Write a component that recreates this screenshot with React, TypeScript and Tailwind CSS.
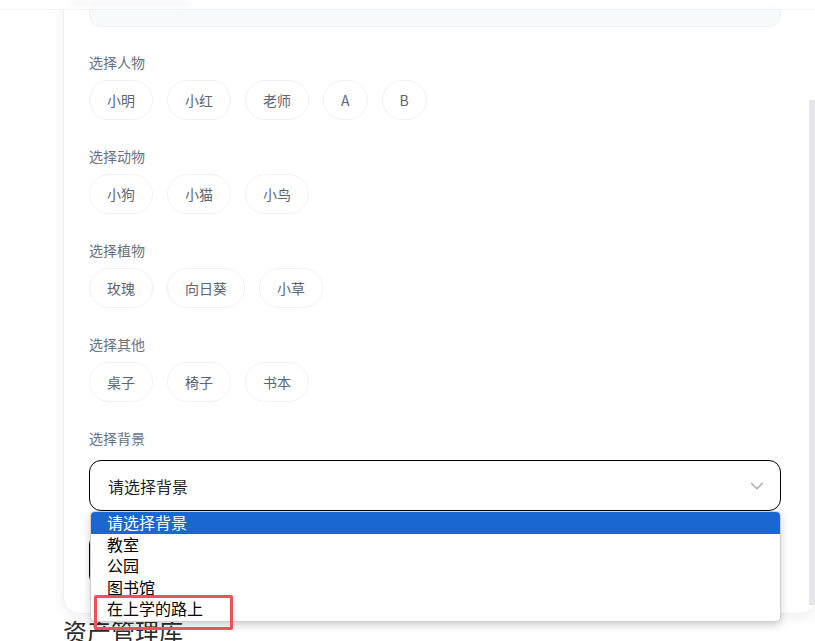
import React from "react";
import { ChevronDown } from "lucide-react";

const sections: { label: string; items: string[] }[] = [
  { label: "选择人物", items: ["小明", "小红", "老师", "A", "B"] },
  { label: "选择动物", items: ["小狗", "小猫", "小鸟"] },
  { label: "选择植物", items: ["玫瑰", "向日葵", "小草"] },
  { label: "选择其他", items: ["桌子", "椅子", "书本"] },
];

const options = ["请选择背景", "教室", "公园", "图书馆", "在上学的路上"];

export default function App() {
  return (
    <div
      className="relative w-[815px] h-[641px] overflow-hidden bg-white"
      style={{ fontFamily: '"Noto Sans CJK SC", "Noto Sans", sans-serif' }}
    >
      {/* header */}
      <div className="relative z-10 h-[10px] bg-white/90 border-b border-[#f0f1f3] flex items-start pl-[70px]">
        <div className="w-[118px] h-[6px] bg-gray-100/70 blur-[3px]" />
      </div>

      {/* main area */}
      <div className="pl-[63px]">
        <div className="-mt-[35px] w-[754px] bg-white border border-[#f0f0f2] rounded-2xl shadow-[0_4px_14px_rgba(0,0,0,0.06)] pl-[25px] pr-[35px] pt-[25px] pb-[26px]">
          <div className="h-[26px] rounded-xl bg-[#f8f9fb] border border-[#f0f1f4]" />

          <div className="mt-[24px] flex flex-col gap-[25px]">
            {sections.map((s) => (
              <div key={s.label} className="flex flex-col">
                <div className="text-[14px] leading-[22px] text-[#6b7280] mb-[7px]">{s.label}</div>
                <div className="flex gap-[14px]">
                  {s.items.map((it) => (
                    <div
                      key={it}
                      className="h-10 px-[17px] rounded-full border border-[#eff0f2] bg-white flex items-center text-[14px] text-[#60656f]"
                    >
                      {it}
                    </div>
                  ))}
                </div>
              </div>
            ))}

            <div className="flex flex-col">
              <div className="text-[14px] leading-[22px] text-[#6b7280] mb-[11px]">选择背景</div>
              <div className="h-[51px] rounded-xl border border-black bg-white flex items-center justify-between pl-[18px] pr-3">
                <span className="text-[16px] text-[#1f1f1f]">请选择背景</span>
                <ChevronDown size={22} strokeWidth={1.4} color="#a3a8b3" />
              </div>
              <div className="mt-[22px] h-[54px] rounded-xl bg-[#111827] border border-black" />
            </div>
          </div>
        </div>

        <div className="mt-[1px] text-[24px] leading-8 text-[#2b2b2b]">资产管理库</div>
      </div>

      {/* scrollbar strip */}
      <div className="absolute left-[809px] top-[100px] w-[6px] h-[505px] bg-[#e6e6ea]" />

      {/* native select popup */}
      <div className="absolute left-[90px] top-[511px] w-[691px] h-[111px] bg-white rounded-[5px] border border-[#d0d0d0] shadow-[0_3px_8px_rgba(0,0,0,0.18)] overflow-hidden">
        {options.map((o, i) => (
          <div
            key={o}
            className={
              i === 0
                ? "h-[21.5px] leading-[21.5px] pl-[16px] text-[16px] bg-[#1a67d2] text-white"
                : "h-[21.5px] leading-[21.5px] pl-[16px] text-[16px] text-black"
            }
          >
            {o}
          </div>
        ))}
      </div>

      {/* red annotation box */}
      <div className="absolute left-[94px] top-[595px] w-[139px] h-[35px] border-[3px] border-[#f05353] rounded-[2px]" />
    </div>
  );
}
